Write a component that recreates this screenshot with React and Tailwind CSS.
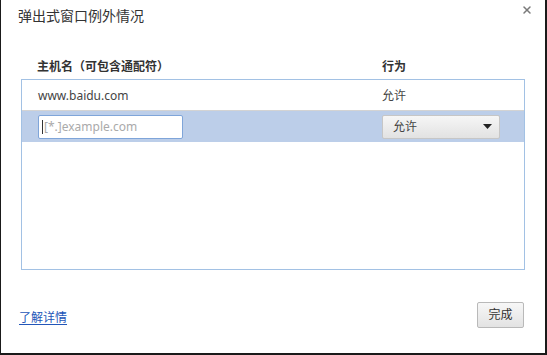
import { X } from 'lucide-react';

const font = { fontFamily: '"Noto Sans", "Noto Sans CJK SC", sans-serif' };

const App = () => {
  return (
    <div
      className="w-[547px] h-[355px] bg-white border-l border-r-2 border-b-2 border-[#1a1a1a] flex flex-col text-[#333]"
      style={font}
    >
      <div className="flex justify-between items-start pl-[17px] pr-[12px] pt-[5px]">
        <h1 className="text-[14px] leading-[22px] font-normal text-[#333]">弹出式窗口例外情况</h1>
        <X size={12} strokeWidth={3} className="text-[#7a7a7a] mt-[-1px]" />
      </div>

      <div className="px-[20px] mt-[32px]">
        <div className="flex pl-[16px] text-[12px] leading-[16px] font-bold text-[#333]">
          <div className="w-[345px]">主机名（可包含通配符）</div>
          <div>行为</div>
        </div>

        <div className="mt-[4px] w-[504px] h-[191px] border border-[#a2c1e4] flex flex-col">
          <div className="h-[31px] pt-[2px] flex items-center pl-[16px] text-[12px] text-[#444] border-b border-[#d3d3d3]">
            <div className="w-[344px]">www.baidu.com</div>
            <div>允许</div>
          </div>
          <div className="h-[31px] flex items-center pl-[16px] bg-[#bccee9]">
            <div className="w-[344px]">
              <div className="w-[145px] h-[24px] bg-white border border-[#7fa5d9] rounded-[2px] flex items-center pl-[3px] text-[12px] text-[#aaa]">
                <span className="w-px h-[14px] bg-[#333] mr-[1px]" />
                [*.]example.com
              </div>
            </div>
            <div className="w-[118px] h-[24px] border border-[#c6c6c6] rounded-[2px] bg-gradient-to-b from-[#f6f6f6] to-[#e2e2e2] flex items-center justify-between pl-[10px] pr-[6px] text-[12px] text-[#444]">
              <span>允许</span>
              <svg width="9" height="5" viewBox="0 0 9 5" className="mr-[1px]">
                <path d="M0 0 L9 0 L4.5 5 Z" fill="#222" />
              </svg>
            </div>
          </div>
        </div>
      </div>

      <div className="flex items-center justify-between pl-[18px] pr-[21px] mt-[32px]">
        <a className="text-[12px] leading-[16px] text-[#2356b8] underline underline-offset-2 mt-[6px]">了解详情</a>
        <button className="w-[47px] h-[26px] border border-[#b9b9b9] rounded-[2px] bg-gradient-to-b from-[#f7f7f7] to-[#e3e3e3] text-[12px] text-[#333]">
          完成
        </button>
      </div>
    </div>
  );
};

export default App;
